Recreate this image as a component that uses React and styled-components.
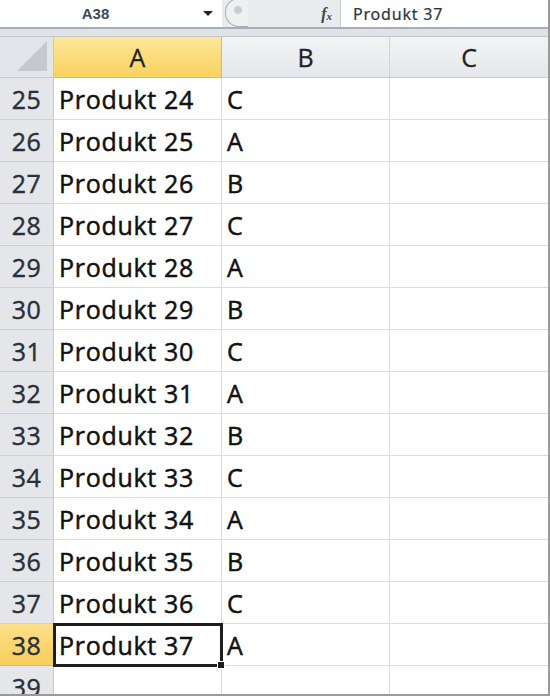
import React from "react";
import styled, { createGlobalStyle } from "styled-components";

const GlobalStyle = createGlobalStyle`
  html, body {
    margin: 0;
    padding: 0;
    background: #ffffff;
  }
  body {
    font-family: "Open Sans", "Noto Sans", sans-serif;
  }
`;

const rows = [
  ["Produkt 24", "C"],
  ["Produkt 25", "A"],
  ["Produkt 26", "B"],
  ["Produkt 27", "C"],
  ["Produkt 28", "A"],
  ["Produkt 29", "B"],
  ["Produkt 30", "C"],
  ["Produkt 31", "A"],
  ["Produkt 32", "B"],
  ["Produkt 33", "C"],
  ["Produkt 34", "A"],
  ["Produkt 35", "B"],
  ["Produkt 36", "C"],
  ["Produkt 37", "A"],
  ["", ""],
];

const App = () => {
  return (
    <>
      <GlobalStyle />
      <Frame>
        <FormulaBar>
          <NameBox>
            <NameText>A38</NameText>
            <DropArrow />
          </NameBox>
          <Middle>
            <Grip />
            <Fx>
              f<sub>x</sub>
            </Fx>
          </Middle>
          <FormulaInput>Produkt 37</FormulaInput>
        </FormulaBar>
        <Band />
        <Sheet>
          <Corner>
            <CornerTriangle />
          </Corner>
          <ColHeader active>A</ColHeader>
          <ColHeader>B</ColHeader>
          <ColHeader last>C</ColHeader>
          {rows.map((r, i) => {
            const num = 25 + i;
            const active = num === 38;
            return (
              <React.Fragment key={num}>
                <RowHeader active={active}>{num}</RowHeader>
                <Cell active={active}>
                  {r[0]}
                  {active && <Handle />}
                </Cell>
                <Cell>{r[1]}</Cell>
                <Cell last />
              </React.Fragment>
            );
          })}
        </Sheet>
      </Frame>
    </>
  );
};

const Frame = styled.div`
  width: 550px;
  height: 696px;
  box-sizing: border-box;
  border-right: 2px solid #9a9a9a;
  border-bottom: 2px solid #9a9a9a;
  overflow: hidden;
  background: #ffffff;
`;

const FormulaBar = styled.div`
  display: flex;
  height: 27px;
  border-bottom: 2px solid #a8aeb6;
  background: #e9ecef;
`;

const NameBox = styled.div`
  width: 222px;
  background: #ffffff;
  display: flex;
  align-items: center;
`;

const NameText = styled.span`
  flex: 1;
  text-align: center;
  font-family: "Liberation Sans", Arial, sans-serif;
  font-size: 15px;
  font-weight: bold;
  color: #3d4a5c;
  margin-left: -12px;
`;

const DropArrow = styled.span`
  width: 0;
  height: 0;
  border-left: 5px solid transparent;
  border-right: 5px solid transparent;
  border-top: 5px solid #222;
  margin-right: 9px;
`;

const Middle = styled.div`
  width: 118px;
  display: flex;
  align-items: center;
  justify-content: space-between;
  background: #e9ecef;
`;

const Grip = styled.div`
  width: 22px;
  height: 27px;
  margin-left: 3px;
  margin-top: -2px;
  border: 1px solid #a9aeb4;
  border-right: none;
  border-radius: 14px 0 0 14px;
  background: radial-gradient(circle at 12px 11px, #c8ccd2 3px, #eef0f2 5px);
`;

const Fx = styled.span`
  font-family: "Liberation Serif", "Times New Roman", serif;
  font-style: italic;
  font-weight: bold;
  font-size: 16px;
  color: #444;
  margin-right: 8px;
  sub {
    font-size: 11px;
    vertical-align: -1px;
  }
`;

const FormulaInput = styled.div`
  flex: 1;
  background: #ffffff;
  border-left: 1px solid #c9cdd2;
  display: flex;
  align-items: center;
  padding-left: 12px;
  font-family: "Noto Sans", sans-serif;
  font-size: 16px;
  letter-spacing: 0.8px;
  -webkit-text-stroke: 0.2px #2d3440;
  color: #2d3440;
`;

const Band = styled.div`
  height: 7px;
  background: #dfe3e8;
  border-bottom: 1px solid #c2c7ce;
`;

const Sheet = styled.div`
  display: grid;
  grid-template-columns: 54px 168px 168px 1fr;
  grid-template-rows: 41px;
  grid-auto-rows: 42px;
`;

const Corner = styled.div`
  background: #e2e5e9;
  border-right: 1px solid #c6cbd1;
  border-bottom: 1px solid #c6cbd1;
  position: relative;
`;

const CornerTriangle = styled.div`
  position: absolute;
  right: 6px;
  bottom: 6px;
  width: 0;
  height: 0;
  border-left: 30px solid transparent;
  border-bottom: 30px solid #c5c9ce;
`;

const ColHeader = styled.div`
  display: flex;
  align-items: center;
  justify-content: center;
  font-family: "Open Sans", sans-serif;
  font-size: 25px;
  -webkit-text-stroke: 0.3px #222;
  color: #222;
  background: ${(p) =>
    p.active
      ? "linear-gradient(#fde79a, #f9d25f)"
      : "linear-gradient(#f2f3f5, #e4e7eb)"};
  border-right: ${(p) =>
    p.last ? "none" : p.active ? "1px solid #e2b65a" : "1px solid #cfd4da"};
  border-bottom: 1px solid ${(p) => (p.active ? "#e2b65a" : "#c6cbd1")};
`;

const RowHeader = styled.div`
  display: flex;
  align-items: center;
  justify-content: center;
  font-family: "Open Sans", sans-serif;
  font-size: 25px;
  letter-spacing: 0.5px;
  -webkit-text-stroke: 0.4px #2a2f36;
  color: #2a2f36;
  background: ${(p) =>
    p.active ? "linear-gradient(#fde08a, #f8cd5a)" : "#e4e6e9"};
  border-right: 1px solid ${(p) => (p.active ? "#e2b65a" : "#c6cbd1")};
  border-bottom: 1px solid ${(p) => (p.active ? "#e2b65a" : "#cdd1d6")};
`;

const Cell = styled.div`
  position: relative;
  display: flex;
  align-items: center;
  padding-left: 5px;
  font-family: "Open Sans", sans-serif;
  font-size: 25px;
  letter-spacing: 0.7px;
  -webkit-text-stroke: 0.5px #111;
  color: #111;
  border-right: ${(p) => (p.last ? "none" : "1px solid #d8dbdf")};
  border-bottom: 1px solid #d8dbdf;
  outline: ${(p) => (p.active ? "3px solid #1d1d1d" : "none")};
  outline-offset: -2px;
  z-index: ${(p) => (p.active ? 1 : 0)};
`;

const Handle = styled.span`
  position: absolute;
  right: -4px;
  bottom: -4px;
  width: 6px;
  height: 6px;
  background: #1d1d1d;
  border: 1px solid #fff;
`;

export default App;
